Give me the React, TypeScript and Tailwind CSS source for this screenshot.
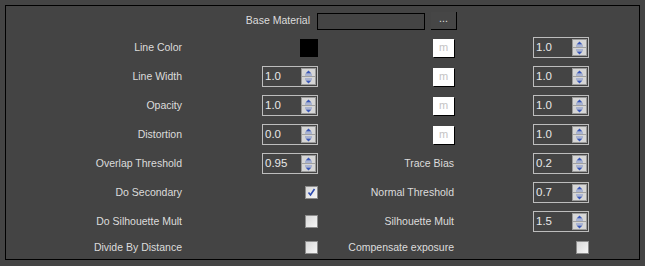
import React from "react";

const font = { fontFamily: '"Liberation Sans", Arial, sans-serif' };

function Spinner({ value }: { value: string }) {
  return (
    <div className="flex h-[21px] w-[56px] border border-[#bdbdbd] bg-[#444444]">
      <div className="flex flex-1 items-center pl-[2px] text-[11.5px] text-[#e8e8e8]">{value}</div>
      <div className="my-[1px] mr-[1px] flex w-[15px] flex-col border border-[#9a9a9a] bg-[#d6d6d6]">
        <div className="flex flex-1 items-center justify-center border-b border-[#a0a0a0]">
          <svg width="7" height="6" viewBox="0 0 7 6">
            <path d="M3.5 0.5 L6.5 3.5 L0.5 3.5 Z" fill="#3b58b8" />
            <rect x="0" y="4.5" width="7" height="1" fill="#7d8fcc" />
          </svg>
        </div>
        <div className="flex flex-1 items-center justify-center">
          <svg width="7" height="6" viewBox="0 0 7 6">
            <rect x="0" y="0.5" width="7" height="1" fill="#7d8fcc" />
            <path d="M0.5 2.5 L6.5 2.5 L3.5 5.5 Z" fill="#3b58b8" />
          </svg>
        </div>
      </div>
    </div>
  );
}

function Check({ checked }: { checked?: boolean }) {
  return (
    <div className="flex h-[13px] w-[13px] items-center justify-center border border-[#8c8c8c] bg-gradient-to-br from-[#d8d8d8] to-[#f6f6f6]">
      {checked && (
        <svg width="9" height="9" viewBox="0 0 9 9">
          <path d="M1.5 4.5 L3.5 7 L7.5 1" stroke="#2c4ab0" strokeWidth="1.6" fill="none" />
        </svg>
      )}
    </div>
  );
}

function MBtn() {
  return (
    <div className="flex h-[18px] w-[21px] items-center justify-center bg-white text-[11px] text-[#c4c4c4] shadow-[1px_1px_0_#000]">
      m
    </div>
  );
}

function Row({
  label,
  ctrl,
  rlabel,
  rmid,
  rctrl,
  h = "h-[29px]",
}: {
  label: string;
  ctrl?: React.ReactNode;
  rlabel?: string;
  rmid?: React.ReactNode;
  rctrl?: React.ReactNode;
  h?: string;
}) {
  return (
    <div className={`flex items-center ${h}`}>
      <div className="w-[176px] whitespace-nowrap text-right">{label}</div>
      <div className="ml-[80px] flex w-[56px] justify-end">{ctrl}</div>
      <div className="flex w-[136px] justify-end whitespace-nowrap">
        {rlabel ? <span>{rlabel}</span> : rmid}
      </div>
      <div className="ml-[79px] flex w-[56px] justify-end">{rctrl}</div>
    </div>
  );
}

export default function App() {
  return (
    <div className="h-[266px] w-[645px] bg-[#444444] p-[5px] text-[10.5px] text-[#dcdcdc]" style={font}>
      <div className="h-[255px] w-[635px] border border-black pt-[6px]">
        <div className="flex h-[18px] items-center">
          <div className="ml-[234px] w-[70px] whitespace-nowrap text-right">Base Material</div>
          <div className="ml-[7px] h-[17px] w-[108px] border border-black" />
          <div className="ml-[6px] flex h-[18px] w-[26px] items-center justify-center border-r border-b border-black bg-[#464646] pb-[3px] text-[#e0e0e0]">
            ...
          </div>
        </div>
        <div className="mt-[3px]">
          <Row
            label="Line Color"
            ctrl={<div className="h-[18px] w-[18px] bg-black" />}
            rmid={<MBtn />}
            rctrl={<Spinner value="1.0" />}
          />
          <Row label="Line Width" ctrl={<Spinner value="1.0" />} rmid={<MBtn />} rctrl={<Spinner value="1.0" />} />
          <Row label="Opacity" ctrl={<Spinner value="1.0" />} rmid={<MBtn />} rctrl={<Spinner value="1.0" />} />
          <Row label="Distortion" ctrl={<Spinner value="0.0" />} rmid={<MBtn />} rctrl={<Spinner value="1.0" />} />
          <Row label="Overlap Threshold" ctrl={<Spinner value="0.95" />} rlabel="Trace Bias" rctrl={<Spinner value="0.2" />} />
          <Row label="Do Secondary" ctrl={<Check checked />} rlabel="Normal Threshold" rctrl={<Spinner value="0.7" />} />
          <Row label="Do Silhouette Mult" ctrl={<Check />} rlabel="Silhouette Mult" rctrl={<Spinner value="1.5" />} />
          <Row label="Divide By Distance" ctrl={<Check />} rlabel="Compensate exposure" rctrl={<Check />} h="h-[23px]" />
        </div>
      </div>
    </div>
  );
}
